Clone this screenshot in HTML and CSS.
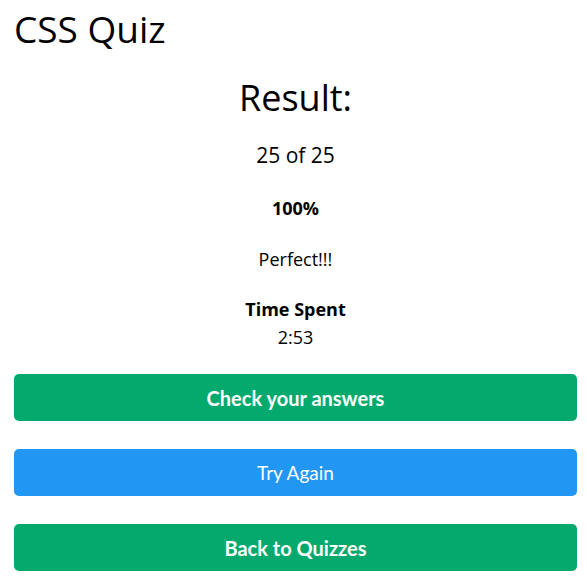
FILE: index.html
```html
<!DOCTYPE html>
<html lang="en">
<head>
<meta charset="utf-8">
<title>CSS Quiz</title>
<link rel="stylesheet" href="styles.css">
</head>
<body>
<div class="page">
  <h1 class="title">CSS Quiz</h1>
  <div class="result">
    <h2 class="result-heading">Result:</h2>
    <p class="score">25 of 25</p>
    <p class="percent">100%</p>
    <p class="comment">Perfect!!!</p>
    <p class="time-label">Time Spent</p>
    <p class="time-value">2:53</p>
  </div>
  <div class="actions">
    <a class="btn btn-green">Check your answers</a>
    <a class="btn btn-blue btn-light">Try Again</a>
    <a class="btn btn-green">Back to Quizzes</a>
  </div>
</div>
</body>
</html>
```

FILE: styles.css
```css
html, body {
  margin: 0;
  padding: 0;
  background: #fff;
}
body {
  font-family: "Open Sans", "Noto Sans", sans-serif;
  color: #000;
}
.page {
  padding: 0 10px 0 14px;
}
.title {
  margin: 0;
  padding-top: 7px;
  font-size: 37px;
  font-weight: 400;
  line-height: 44px;
}
.result {
  text-align: center;
}
.result-heading {
  margin: 25px 0 0;
  font-size: 36px;
  font-weight: 400;
  line-height: 44px;
}
.score {
  margin: 21px 0 0;
  font-size: 21px;
  line-height: 28px;
}
.percent {
  margin: 27px 0 0;
  font-size: 18px;
  font-weight: 700;
  line-height: 24px;
}
.comment {
  margin: 27px 0 0;
  font-size: 18px;
  line-height: 24px;
}
.time-label {
  margin: 26px 0 0;
  font-size: 18px;
  font-weight: 700;
  line-height: 24px;
}
.time-value {
  margin: 4px 0 0;
  font-size: 18px;
  line-height: 24px;
}
.actions {
  display: flex;
  flex-direction: column;
  gap: 28px;
  margin-top: 25px;
}
.btn {
  display: flex;
  align-items: center;
  justify-content: center;
  height: 47px;
  border-radius: 5px;
  color: #fff;
  font-family: "Lato", "Open Sans", sans-serif;
  font-size: 20px;
  font-weight: 700;
}
.btn-green {
  background: #04aa6d;
}
.btn-blue {
  background: #2196f3;
}
.btn-light {
  font-size: 19px;
  font-weight: 400;
}
```
